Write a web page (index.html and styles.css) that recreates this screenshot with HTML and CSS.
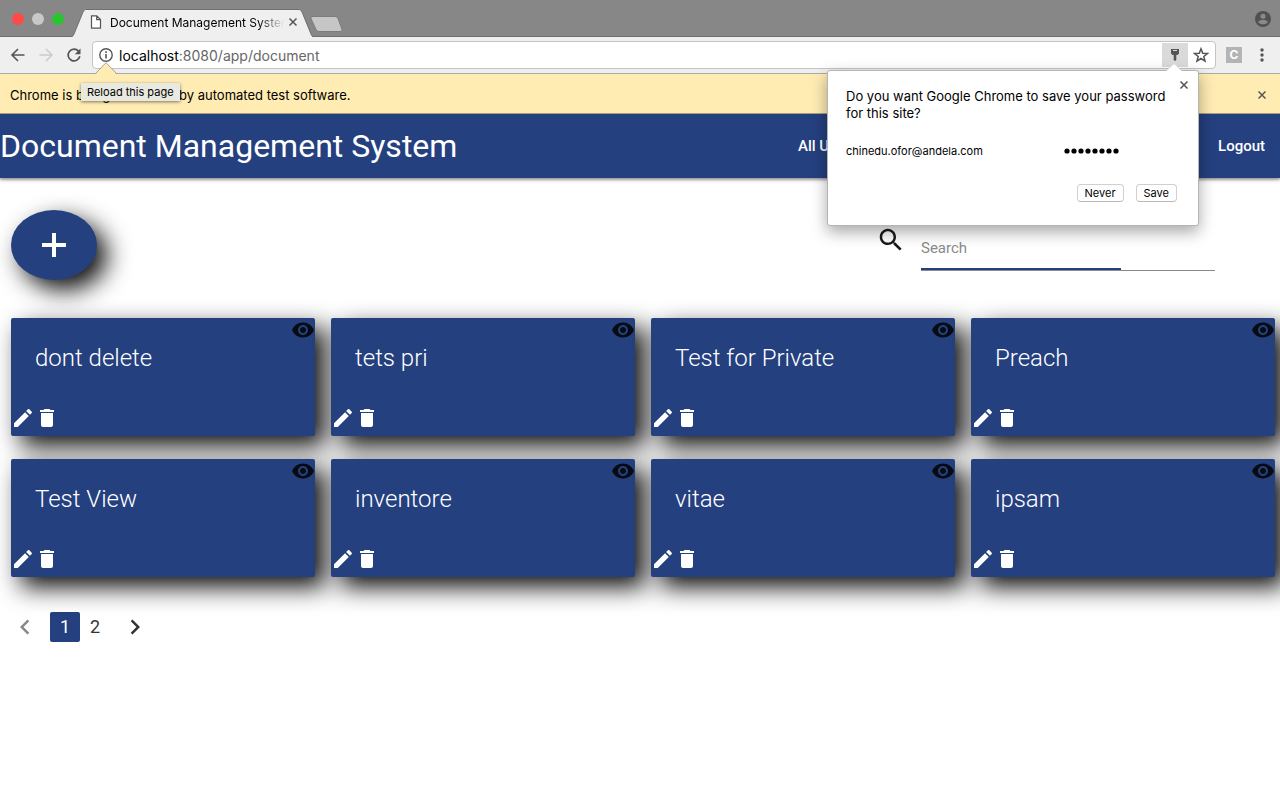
FILE: index.html
```html
<!DOCTYPE html>
<html lang="en">
<head>
<meta charset="utf-8">
<title>Document Management System</title>
<link rel="stylesheet" href="styles.css">
</head>
<body>
<svg class="sprites" aria-hidden="true">
  <symbol id="eye" viewBox="0 0 24 24"><path d="M12 4.500C7 4.500 2.730 7.610 1 12c1.730 4.390 6 7.500 11 7.500s9.270-3.110 11-7.500c-1.730-4.390-6-7.500-11-7.500zM12 17c-2.760 0-5-2.240-5-5s2.240-5 5-5 5 2.240 5 5-2.240 5-5 5zm0-8c-1.660 0-3 1.340-3 3s1.340 3 3 3 3-1.340 3-3-1.340-3-3-3z"/></symbol>
  <symbol id="edit" viewBox="0 0 24 24"><path d="M3 17.250V21h3.750L17.810 9.940l-3.750-3.750L3 17.250zM20.710 7.040c.39-.39.39-1.020 0-1.410l-2.340-2.340c-.39-.39-1.020-.39-1.410 0l-1.830 1.830 3.750 3.750 1.830-1.830z"/></symbol>
  <symbol id="trash" viewBox="0 0 24 24"><path d="M6 19c0 1.100.9 2 2 2h8c1.100 0 2-.9 2-2V7H6v12zM19 4h-3.500l-1-1h-5l-1 1H5v2h14V4z"/></symbol>
  <symbol id="close" viewBox="0 0 10 10"><path d="M1.500 1.500l7 7M8.500 1.500l-7 7" fill="none" stroke="currentColor" stroke-width="1.500"/></symbol>
</svg>

<div class="tabstrip">
  <div class="lights"><i class="light red"></i><i class="light grey"></i><i class="light green"></i></div>
  <div class="tab">
    <svg class="tab-shape" viewBox="0 0 242 28" aria-hidden="true"><path d="M0 28C2 28 2.500 26 3 25L12 3C13 1 14 .5 15 .5H227C229 .5 230 1 231 3L240 25C240.500 26 241 28 242 28Z" fill="#efefef"/><path d="M0 27.500C2 27.500 2.500 26 3 25L12 3C13 1 14 .5 15 .5H227C229 .5 230 1 231 3L240 25C240.500 26 241 27.500 242 27.500" fill="none" stroke="#6f6f6f"/></svg>
    <svg class="page-icon" width="12" height="14" viewBox="0 0 12 14" aria-hidden="true"><path d="M1.500.8h5.200l3.800 3.800v8.600h-9zM6.700.8v3.800h3.800" fill="#fff" stroke="#555" stroke-width="1.200"/></svg>
    <span class="tab-title">Document Management System</span>
    <button class="x" aria-label="Close tab"><svg width="10" height="10"><use href="#close"/></svg></button>
  </div>
  <button class="new-tab" aria-label="New tab"><svg width="34" height="18" viewBox="0 0 34 18"><path d="M3 1.500H25Q27 1.500 28 3.500L32 14.500Q32.500 16.500 30 16.500H9Q7 16.500 6 14.500L1 3.500Q.5 1.500 3 1.500Z" fill="#c6c6c6" stroke="#7c7c7c"/></svg></button>
  <svg class="profile" width="16" height="16" viewBox="0 0 16 16" aria-hidden="true"><circle cx="8" cy="8" r="8" fill="#515151"/><circle cx="8" cy="5.200" r="2.500" fill="#8a8a8a"/><path d="M3.200 11.200C3.500 7.800 12.500 7.800 12.800 11.200 10.500 14 5.500 14 3.200 11.200Z" fill="#8a8a8a"/></svg>
</div>

<div class="toolbar">
  <button class="tool" aria-label="Back"><svg width="16" height="16" viewBox="0 0 16 16"><path d="M14.500 8H2.500M8 2L2 8l6 6" fill="none" stroke="#555" stroke-width="1.600"/></svg></button>
  <button class="tool" aria-label="Forward"><svg width="16" height="16" viewBox="0 0 16 16"><path d="M1.500 8h12M8 2l6 6-6 6" fill="none" stroke="#ccc" stroke-width="1.600"/></svg></button>
  <button class="tool" aria-label="Reload"><svg width="16" height="16" viewBox="0 0 16 16"><path d="M12.600 4.300A5.900 5.900 0 1 0 13.800 9.300" fill="none" stroke="#555" stroke-width="1.700"/><path d="M14.500 1.500v5.700H8.800z" fill="#555"/></svg></button>
  <div class="omnibox">
    <svg width="16" height="16" viewBox="0 0 16 16" aria-hidden="true"><circle cx="8" cy="8" r="6.200" fill="none" stroke="#555" stroke-width="1.400"/><path d="M7.200 7h1.600v4.500H7.200zM7.200 4.300h1.600v1.600H7.200z" fill="#555"/></svg>
    <span class="url"><b>localhost</b>:8080/app/document</span>
    <div class="key-wrap">
      <button class="key" aria-label="Saved passwords"><svg width="10" height="14" viewBox="0 0 10 14"><path d="M1 1h8v4.500L7.500 7H6.300v5L5 13 3.700 12V7H2.500L1 5.500z" fill="#555"/><path d="M3 2.500h4" stroke="#ddd"/></svg></button>
      <section class="bubble" aria-label="Save password">
        <svg class="bubble-arrow" width="18" height="9" viewBox="0 0 18 9" aria-hidden="true"><path d="M0 9L9 0l9 9z" fill="#fff"/><path d="M1 8L9 .5 17 8" fill="none" stroke="#bbb" stroke-width=".6"/></svg>
        <button class="x bubble-x" aria-label="Dismiss"><svg width="10" height="10"><use href="#close"/></svg></button>
        <p class="question">Do you want Google Chrome to save your password for this site?</p>
        <div class="credentials"><span>chinedu.ofor@andela.com</span><svg class="dots" width="56" height="6" viewBox="0 0 56 6" role="img" aria-label="Hidden password"><g fill="#000"><circle cx="3" cy="3" r="2.600"/><circle cx="10" cy="3" r="2.600"/><circle cx="17" cy="3" r="2.600"/><circle cx="24" cy="3" r="2.600"/><circle cx="31" cy="3" r="2.600"/><circle cx="38" cy="3" r="2.600"/><circle cx="45" cy="3" r="2.600"/><circle cx="52" cy="3" r="2.600"/></g></svg></div>
        <div class="actions"><button>Never</button><button>Save</button></div>
      </section>
    </div>
    <button class="star" aria-label="Bookmark"><svg width="16" height="16" viewBox="0 0 16 16"><path d="M8 1.800l1.700 4.400 4.700.3-3.600 3 1.200 4.600L8 11.500l-4 2.600 1.200-4.600-3.600-3 4.700-.3z" fill="none" stroke="#555" stroke-width="1.500"/></svg></button>
  </div>
  <span class="extension">C</span>
  <button class="more" aria-label="Menu"><svg width="4" height="14" viewBox="0 0 4 14"><g fill="#555"><circle cx="2" cy="2" r="1.700"/><circle cx="2" cy="7" r="1.700"/><circle cx="2" cy="12" r="1.700"/></g></svg></button>
</div>

<div class="infobar">
  <svg class="info-arrow" width="22" height="13" viewBox="0 0 22 13" aria-hidden="true"><path d="M0 13L11 1l11 12z" fill="#ffecb3"/><path d="M0 12L11 .7 22 12" fill="none" stroke="#a9a08a"/></svg>
  <span>Chrome is being controlled by automated test software.</span>
  <span class="tooltip" role="tooltip">Reload this page</span>
  <button class="x" aria-label="Close"><svg width="10" height="10"><use href="#close"/></svg></button>
</div>

<header class="nav">
  <a class="logo" href="#">Document Management System</a>
  <nav class="links"><a href="#">All Users</a><a href="#">Logout</a></nav>
</header>

<main>
  <div class="controls">
    <button class="add" aria-label="Add document"><svg width="24" height="24" viewBox="0 0 24 24"><path d="M12 0v24M0 12h24" stroke="#fff" stroke-width="4"/></svg></button>
    <div class="search">
      <svg width="30" height="30" viewBox="0 0 24 24" aria-hidden="true"><path fill="#1a1a1a" d="M15.500 14h-.79l-.28-.27C15.410 12.590 16 11.110 16 9.500 16 5.910 13.090 3 9.500 3S3 5.910 3 9.500 5.910 16 9.500 16c1.610 0 3.090-.59 4.230-1.570l.27.28v.79l5 4.990L20.490 19l-4.990-5zm-6 0C7.010 14 5 11.990 5 9.500S7.010 5 9.500 5 14 7.010 14 9.500 11.990 14 9.500 14z"/></svg>
      <input type="text" placeholder="Search" aria-label="Search">
    </div>
  </div>
  <div class="cards">
    <article class="card"><svg class="eye"><use href="#eye"/></svg><h2>dont delete</h2><div class="tools"><button aria-label="Edit"><svg><use href="#edit"/></svg></button><button aria-label="Delete"><svg><use href="#trash"/></svg></button></div></article>
    <article class="card"><svg class="eye"><use href="#eye"/></svg><h2>tets pri</h2><div class="tools"><button aria-label="Edit"><svg><use href="#edit"/></svg></button><button aria-label="Delete"><svg><use href="#trash"/></svg></button></div></article>
    <article class="card"><svg class="eye"><use href="#eye"/></svg><h2>Test for Private</h2><div class="tools"><button aria-label="Edit"><svg><use href="#edit"/></svg></button><button aria-label="Delete"><svg><use href="#trash"/></svg></button></div></article>
    <article class="card"><svg class="eye"><use href="#eye"/></svg><h2>Preach</h2><div class="tools"><button aria-label="Edit"><svg><use href="#edit"/></svg></button><button aria-label="Delete"><svg><use href="#trash"/></svg></button></div></article>
    <article class="card"><svg class="eye"><use href="#eye"/></svg><h2>Test View</h2><div class="tools"><button aria-label="Edit"><svg><use href="#edit"/></svg></button><button aria-label="Delete"><svg><use href="#trash"/></svg></button></div></article>
    <article class="card"><svg class="eye"><use href="#eye"/></svg><h2>inventore</h2><div class="tools"><button aria-label="Edit"><svg><use href="#edit"/></svg></button><button aria-label="Delete"><svg><use href="#trash"/></svg></button></div></article>
    <article class="card"><svg class="eye"><use href="#eye"/></svg><h2>vitae</h2><div class="tools"><button aria-label="Edit"><svg><use href="#edit"/></svg></button><button aria-label="Delete"><svg><use href="#trash"/></svg></button></div></article>
    <article class="card"><svg class="eye"><use href="#eye"/></svg><h2>ipsam</h2><div class="tools"><button aria-label="Edit"><svg><use href="#edit"/></svg></button><button aria-label="Delete"><svg><use href="#trash"/></svg></button></div></article>
  </div>
  <nav class="pages" aria-label="Pages">
    <button class="step" aria-label="Previous page" disabled><svg width="30" height="30" viewBox="0 0 24 24"><path fill="#888" d="M15.410 7.410L14 6l-6 6 6 6 1.410-1.410L10.830 12z"/></svg></button>
    <a class="current" href="#">1</a><a href="#">2</a>
    <button class="step" aria-label="Next page"><svg width="30" height="30" viewBox="0 0 24 24"><path fill="#333" d="M10 6L8.590 7.410 13.170 12l-4.580 4.590L10 18l6-6z"/></svg></button>
  </nav>
</main>
</body>
</html>
```
FILE: styles.css
```css
* { box-sizing: border-box; }
body { margin: 0; background: #fff; font-family: Roboto, sans-serif; overflow-x: hidden; }
button { border: 0; padding: 0; background: none; font: inherit; color: inherit; display: flex; align-items: center; justify-content: center; }
a { color: inherit; text-decoration: none; }
svg { display: block; flex: none; }
.sprites { position: absolute; width: 0; height: 0; }

/* browser frame */
.tabstrip, .toolbar, .infobar { font-family: Inter, "Liberation Sans", sans-serif; font-size: 13px; color: #000; display: flex; }
.tabstrip { height: 37px; padding: 0 9px 0 12px; background: #878787; border-bottom: 1px solid #6f6f6f; align-items: flex-end; }
.lights { display: flex; gap: 8px; align-self: center; padding-top: 2px; }
.light { width: 12px; height: 12px; border-radius: 50%; }
.red { background: #ff4a47; }
.grey { background: #c8c8c8; }
.green { background: #28c52f; }
.tab { position: relative; width: 242px; height: 28px; margin: 0 0 -1px 7px; padding: 0 15px 2px 19px; display: flex; align-items: center; gap: 8px; }
.tab-shape { position: absolute; left: 0; top: 0; width: 100%; height: 100%; }
.page-icon, .tab .x { position: relative; }
.tab-title { position: relative; flex: 1; margin-right: -4px; font-size: 12px; white-space: nowrap; overflow: hidden; -webkit-mask-image: linear-gradient(90deg, #000 85%, transparent); mask-image: linear-gradient(90deg, #000 85%, transparent); }
.x { color: #555; }
.new-tab { margin: 0 0 3px -3px; }
.profile { margin: 0 0 9px auto; }
.toolbar { height: 37px; padding: 0 16px 0 10px; align-items: center; background: #efefef; border-bottom: 1px solid #aaa; }
.tool { width: 16px; margin-right: 12px; }
.omnibox { flex: 1; height: 28px; margin-left: -2px; padding-left: 5px; border: 1px solid #c4c4c4; border-radius: 4px; background: #fff; display: flex; align-items: center; }
.url { flex: 1; margin-left: 5px; font-size: 14px; color: #666; }
.url b { font-weight: 400; color: #000; }
.key-wrap { position: relative; }
.key { width: 26px; height: 24px; background: #dadada; }
.star { width: 27px; height: 24px; padding-right: 2px; }
.extension { width: 16px; height: 16px; margin: 0 18px 0 10px; background: #b4b4b4; color: #fff; font-size: 12px; font-weight: 700; line-height: 16px; text-align: center; }
.bubble { position: absolute; z-index: 5; right: -11px; top: 27px; width: 372px; padding: 17px 21px 23px 18px; background: #fff; border: 1px solid #b5b5b5; border-radius: 3px; box-shadow: 0 6px 16px rgba(0, 0, 0, .35); }
.bubble-arrow { position: absolute; right: 15px; top: -8px; }
.bubble-x { position: absolute; right: 9px; top: 9px; }
.question { margin: 0; width: 320px; font-size: 13px; line-height: 17px; }
.credentials { margin-top: 20px; display: flex; align-items: center; justify-content: space-between; padding-right: 57px; font-size: 11px; line-height: 18px; }
.actions { display: flex; justify-content: flex-end; gap: 12px; margin-top: 24px; font-size: 11px; }
.actions button { height: 18px; padding: 0 7px; background: #fff; border: 1px solid #d0d0d0; border-bottom-color: #b8b8b8; border-radius: 4px; }
.infobar { position: relative; height: 40px; padding: 3px 13px 0 10px; align-items: center; justify-content: space-between; background: #ffecb3; border-bottom: 1px solid #aa9f7c; }
.info-arrow { position: absolute; left: 95px; top: -12px; }
.tooltip { position: absolute; left: 81px; top: 9px; height: 18px; padding: 0 6px; background: #e9e9df; font-size: 11px; line-height: 18px; box-shadow: 0 1px 3px rgba(0, 0, 0, .5); }

/* application */
.nav { height: 64px; display: flex; align-items: center; justify-content: space-between; background: #25407f; color: #fff; box-shadow: 0 2px 2px rgba(0, 0, 0, .24), 0 1px 5px rgba(0, 0, 0, .3); }
.logo { font-size: 32px; }
.links { width: 497px; padding: 0 15px; display: flex; justify-content: space-between; font-size: 15px; font-weight: 500; }
main { padding: 32px 5px 0 11px; }
.controls { display: flex; justify-content: space-between; padding-right: 60px; }
.add { width: 86px; height: 70px; border-radius: 50%; background: #25407f; box-shadow: 10px 10px 25px rgba(0, 0, 0, .95); }
.search { display: flex; gap: 15px; padding-top: 15px; }
.search input { width: 294px; height: 46px; border: 0; border-bottom: 1px solid #8a8a8a; padding: 0; outline: 0; font: 15px Roboto, sans-serif; background: linear-gradient(#25407f, #25407f) left bottom / 200px 2px no-repeat; }
.search input::placeholder { color: #8a8a8a; opacity: 1; }
.cards { display: grid; grid-template-columns: repeat(4, 1fr); gap: 23px 16px; margin-top: 38px; }
.card { position: relative; height: 118px; padding: 24px 0 6px; display: flex; flex-direction: column; justify-content: space-between; border-radius: 2px; background: #25407f; color: #fff; box-shadow: 10px 10px 25px rgba(0, 0, 0, .95); }
.card svg { width: 24px; height: 24px; fill: currentColor; }
.card .eye { position: absolute; right: 0; top: 0; color: #080b12; }
.card h2 { margin: 0 24px; font-size: 24px; font-weight: 300; line-height: 32px; }
.tools { display: flex; }
.pages { display: flex; margin: 35px 0 0 -1px; font-size: 18px; line-height: 30px; color: #333; }
.pages a { width: 30px; text-align: center; border-radius: 2px; }
.pages .current { background: #25407f; color: #fff; }
.step:first-child { margin-right: 10px; }
.step:last-child { margin-left: 10px; }
```
